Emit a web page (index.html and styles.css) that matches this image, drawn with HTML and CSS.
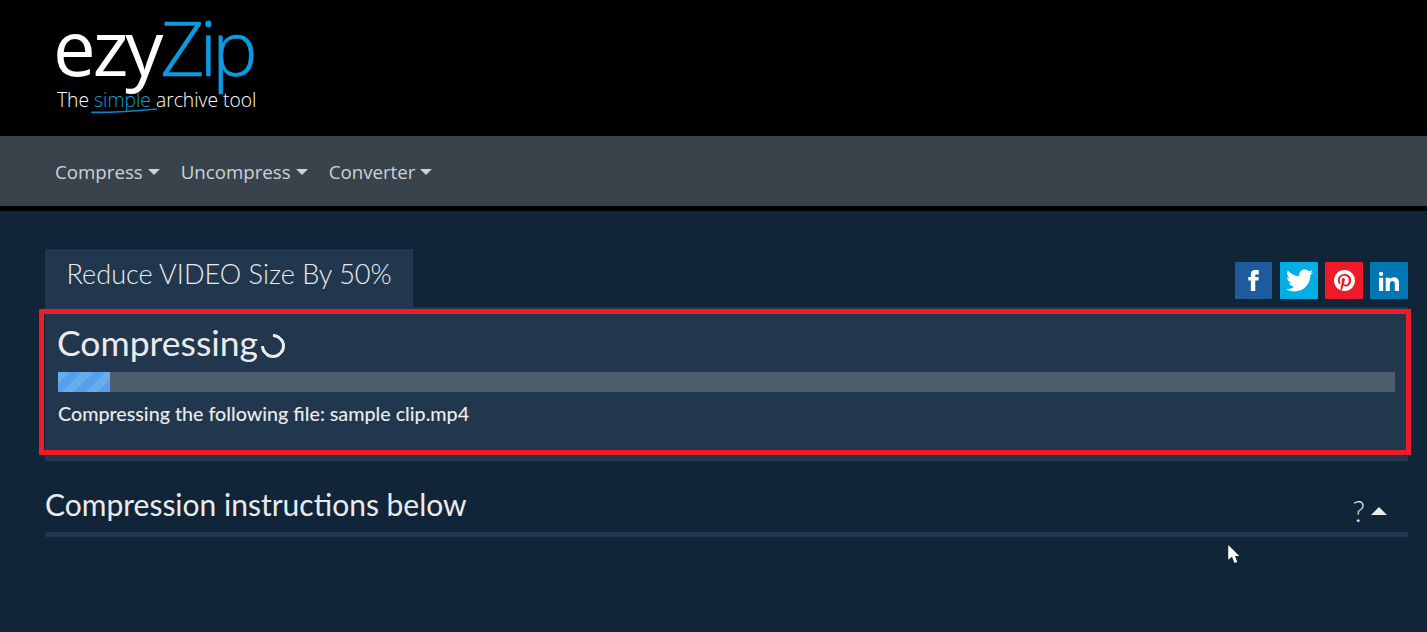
FILE: index.html
```html
<!DOCTYPE html>
<html lang="en">
<head>
    <meta charset="UTF-8">
    <title>ezyZip - Reduce VIDEO Size By 50%</title>
    <link rel="stylesheet" href="styles.css">
</head>
<body>
    <header class="brand">
        <div class="logo">
            <div class="logo-name">ezy<span class="logo-zip">Zip</span></div>
            <div class="logo-tag">The <span class="logo-simple">simple<svg class="logo-swoosh" viewBox="0 0 66 6" width="66" height="6"><path d="M1 4.4C20 4.6 42 3.4 65 1" fill="none" stroke="#0f83cc" stroke-width="1.7" stroke-linecap="round"/></svg></span> archive tool</div>
        </div>
    </header>

    <nav class="navbar">
        <a class="nav-link">Compress</a>
        <a class="nav-link">Uncompress</a>
        <a class="nav-link">Converter</a>
    </nav>

    <main class="content">
        <div class="title-row">
            <h1 class="tab-title">Reduce VIDEO Size By 50%</h1>
            <div class="share">
                <a class="share-btn share-fb"><svg viewBox="0 0 24 24" width="21" height="21"><path d="M9 8H6v4h3v12h5V12h3.642L18 8h-4V6.333C14 5.378 14.192 5 15.115 5H18V0h-3.808C10.596 0 9 1.583 9 4.615V8z"/></svg></a>
                <a class="share-btn share-tw"><svg viewBox="0 0 24 24" width="27" height="27"><path d="M24 4.557c-.883.392-1.832.656-2.828.775 1.017-.609 1.798-1.574 2.165-2.724-.951.564-2.005.974-3.127 1.195-.897-.957-2.178-1.555-3.594-1.555-3.179 0-5.515 2.966-4.797 6.045-4.091-.205-7.719-2.165-10.148-5.144-1.29 2.213-.669 5.108 1.523 6.574-.806-.026-1.566-.247-2.229-.616-.054 2.281 1.581 4.415 3.949 4.89-.693.188-1.452.232-2.224.084.626 1.956 2.444 3.379 4.6 3.419-2.07 1.623-4.678 2.348-7.29 2.04 2.179 1.397 4.768 2.212 7.548 2.212 9.142 0 14.307-7.721 14.057-14.646.962-.695 1.797-1.562 2.457-2.549z"/></svg></a>
                <a class="share-btn share-pin"><svg viewBox="0 0 24 24" width="21" height="21"><path d="M12 0c-6.627 0-12 5.372-12 12 0 5.084 3.163 9.426 7.627 11.174-.105-.949-.2-2.405.042-3.441.218-.937 1.407-5.965 1.407-5.965s-.359-.719-.359-1.782c0-1.668.967-2.914 2.171-2.914 1.023 0 1.518.769 1.518 1.69 0 1.029-.655 2.568-.994 3.995-.283 1.194.599 2.169 1.777 2.169 2.133 0 3.772-2.249 3.772-5.495 0-2.873-2.064-4.882-5.012-4.882-3.414 0-5.418 2.561-5.418 5.208 0 1.031.397 2.137.893 2.739.098.119.112.223.083.344l-.333 1.36c-.053.22-.174.267-.402.161-1.499-.698-2.436-2.889-2.436-4.649 0-3.785 2.75-7.262 7.929-7.262 4.163 0 7.398 2.967 7.398 6.931 0 4.136-2.607 7.464-6.227 7.464-1.216 0-2.359-.631-2.75-1.378l-.748 2.853c-.271 1.043-1.002 2.35-1.492 3.146 1.124.347 2.317.535 3.554.535 6.627 0 12-5.373 12-12 0-6.628-5.373-12-12-12z"/></svg></a>
                <a class="share-btn share-in"><svg viewBox="0 0 24 24" width="20" height="20"><path d="M4.98 3.5c0 1.381-1.11 2.5-2.48 2.5s-2.48-1.119-2.48-2.5c0-1.38 1.11-2.5 2.48-2.5s2.48 1.12 2.48 2.5zm.02 4.5h-5v16h5v-16zm7.982 0h-4.968v16h4.969v-8.399c0-4.67 6.029-5.052 6.029 0v8.399h4.988v-10.131c0-7.88-8.922-7.593-11.018-3.714v-2.155z"/></svg></a>
            </div>
        </div>

        <section class="panel">
            <h2 class="panel-title">Compressing<span class="spinner"></span></h2>
            <div class="progress"><div class="progress-bar" style="width: 52px"></div></div>
            <p class="panel-text">Compressing the following file: sample clip.mp4</p>
        </section>

        <div class="help-row">
            <h3 class="help-title">Compression instructions below</h3>
            <a class="help-toggle"><span class="help-mark">?</span><span class="caret-up"></span></a>
        </div>
    </main>

    <svg class="cursor" viewBox="0 0 12 19" width="13" height="20"><path d="M1 1v14l3.5-3 2.5 6 2.5-1-2-5.5h4z" fill="#fff"/></svg>
</body>
</html>
```

FILE: styles.css
```css
body { margin: 0; height: 632px; overflow: hidden; background-color: #112539; font-family: "Lato", sans-serif; color: #ebebeb; position: relative; }

.brand { height: 136px; box-sizing: border-box; background-color: #000; padding: 3px 0 0 53px; }
.logo-name { font-family: "Open Sans", sans-serif; font-weight: 400; font-size: 76px; line-height: 87px; color: #fff; letter-spacing: -3px; }
.logo-zip { color: #0c9ae0; font-weight: 300; letter-spacing: -4.5px; -webkit-text-stroke: 0.7px #0c9ae0; }
.logo-tag { font-family: "Open Sans", sans-serif; font-weight: 300; font-size: 19.3px; line-height: 20px; color: #fff; padding-left: 4px; }
.logo-simple { color: #1b9ad8; position: relative; }
.logo-swoosh { position: absolute; left: -3px; top: 22px; }

.navbar { height: 70px; box-sizing: border-box; background-color: #38434b; display: flex; align-items: center; padding-left: 55px; gap: 21px; font-family: "Open Sans", sans-serif; font-size: 18.7px; font-weight: 500; color: #ced2d6; margin-bottom: 5px; box-shadow: 0 5px 0 #000; }
.nav-link::after { content: ""; display: inline-block; margin-left: 5px; vertical-align: 4px; border-top: 6px solid #ced2d6; border-left: 6px solid transparent; border-right: 6px solid transparent; }

.content { padding: 38px 19px 0 45px; }

.title-row { display: flex; justify-content: space-between; align-items: flex-end; height: 58px; }
.tab-title { margin: 0; width: 368px; height: 58px; box-sizing: border-box; padding-left: 21.5px; background-color: #21374e; font-size: 27.1px; font-weight: 300; line-height: 50px; }
.share { display: flex; gap: 7px; padding-bottom: 8px; }
.share-btn { width: 38px; height: 37px; border-radius: 1px; display: flex; align-items: center; justify-content: center; }
.share-btn svg { fill: #fff; }
.share-fb { background-color: #1f5a9c; width: 37px; margin-right: 1px; }
.share-tw { background-color: #02aee3; }
.share-pin { background-color: #ef1b28; }
.share-in { background-color: #0178b3; }

.panel { height: 154px; box-sizing: border-box; padding: 12px 13px 0; background-color: #21374e; position: relative; }
.panel::after { content: ""; position: absolute; left: -6px; right: -3px; top: 2px; bottom: 6px; border: 5px solid #ef1b28; }
.panel-title { margin: 0 0 0 -1px; font-size: 35.5px; font-weight: 400; line-height: 47px; display: flex; align-items: flex-end; }
.spinner { display: block; width: 24px; height: 24px; box-sizing: border-box; margin: 0 0 8px 3px; border: 3px solid #ebebeb; border-left-color: transparent; border-radius: 50%; transform: rotate(45deg); }
.progress { height: 20px; margin-top: 6px; background-color: #4e5d6c; }
.progress-bar { height: 100%; background-color: #54a0ec; background-image: linear-gradient(135deg, rgba(255,255,255,.12) 25%, transparent 25%, transparent 50%, rgba(255,255,255,.12) 50%, rgba(255,255,255,.12) 75%, transparent 75%, transparent); background-size: 24px 24px; }
.panel-text { margin: 10px 0 0; font-size: 19.7px; font-weight: 500; line-height: 24px; }

.help-row { display: flex; justify-content: space-between; height: 76px; box-sizing: border-box; border-bottom: 5px solid #21374e; }
.help-title { margin: 23px 0 0; font-size: 30px; font-weight: 400; line-height: 40px; }
.help-toggle { display: flex; align-items: center; margin: 38px 21px 0 0; height: 24px; }
.help-mark { font-size: 29px; font-weight: 300; line-height: 24px; color: #d5e3ea; }
.caret-up { margin-left: 6px; border-bottom: 8px solid #ebebeb; border-left: 8px solid transparent; border-right: 8px solid transparent; margin-bottom: 1px; }

.cursor { position: absolute; left: 1227px; top: 544px; }
```
